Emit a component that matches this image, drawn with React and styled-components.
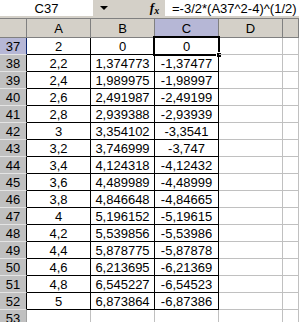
import React from "react";
import styled, { createGlobalStyle } from "styled-components";

const GlobalStyle = createGlobalStyle`
  html, body {
    margin: 0;
    padding: 0;
    background: #ffffff;
    overflow: hidden;
  }
  * {
    box-sizing: border-box;
  }
`;

// Contenedor de la hoja
const Sheet = styled.div`
  width: 299px;
  height: 322px;
  overflow: hidden;
  font-family: "Liberation Sans", Arial, sans-serif;
  font-size: 13px;
  color: #000;
  background: #fff;
`;

// Barra de fórmulas
const FormulaBar = styled.div`
  display: flex;
  height: 18px;
  background: #d4d0c8;
`;

const NameBox = styled.div`
  width: 93px;
  height: 16px;
  background: #fff;
  display: flex;
  align-items: center;
  justify-content: center;
`;

const DropButton = styled.div`
  width: 20px;
  height: 16px;
  display: flex;
  align-items: center;
  justify-content: center;
  padding-left: 2px;
`;

const Arrow = styled.span`
  width: 0;
  height: 0;
  border-left: 4px solid transparent;
  border-right: 4px solid transparent;
  border-top: 4px solid #000;
`;

const FxLabel = styled.div`
  margin-left: auto;
  width: 25px;
  height: 16px;
  display: flex;
  align-items: center;
  justify-content: center;
  font-family: "Liberation Serif", "Times New Roman", serif;
  font-style: italic;
  font-weight: bold;
  font-size: 13px;
  padding-left: 4px;

  span {
    font-size: 10px;
    position: relative;
    top: 2px;
  }
`;

const Formula = styled.div`
  width: 134px;
  height: 16px;
  background: #fff;
  display: flex;
  align-items: center;
  padding-left: 7px;
  white-space: nowrap;
`;

// Cuadrícula
const Grid = styled.div`
  display: grid;
  grid-template-columns: 27px 64px 64px 64px 64px 1fr;
  grid-template-rows: 19px;
  grid-auto-rows: 17px;
  border-top: 1px solid #808080;
`;

const Corner = styled.div`
  background: #d4d0c8;
  border-right: 1px solid #808080;
  border-bottom: 1px solid #808080;
`;

const ColHeader = styled.div`
  display: flex;
  align-items: center;
  justify-content: center;
  background: ${(p) => (p.$active ? "#b6b7d6" : "#d4d0c8")};
  border-right: 1px solid #808080;
  border-bottom: 1px solid ${(p) => (p.$active ? "#0a246a" : "#808080")};
`;

const RowHeader = styled.div`
  display: flex;
  align-items: center;
  justify-content: center;
  background: ${(p) => (p.$active ? "#b6b7d6" : "#c0c0c0")};
  border-right: 1px solid
    ${(p) => (p.$active ? "#0a246a" : p.$framed ? "#000" : "#a0a0a0")};
  border-bottom: 1px solid #e4e4e4;
`;

const Cell = styled.div`
  position: relative;
  display: flex;
  align-items: center;
  justify-content: center;
  white-space: nowrap;
  border-right: 1px solid ${(p) => (p.$framed ? "#000" : "#c0c0c0")};
  border-bottom: 1px solid ${(p) => (p.$framed ? "#000" : "#c0c0c0")};
`;

// Marco de la celda activa
const Selection = styled.div`
  position: absolute;
  top: -2px;
  left: -2px;
  right: -2px;
  bottom: -2px;
  border: 2px solid #000;
  pointer-events: none;
`;

const FillHandle = styled.div`
  position: absolute;
  right: -4px;
  bottom: -4px;
  width: 6px;
  height: 6px;
  background: #000;
  border: 1px solid #fff;
`;

const data = [
  ["2", "0", "0"],
  ["2,2", "1,374773", "-1,37477"],
  ["2,4", "1,989975", "-1,98997"],
  ["2,6", "2,491987", "-2,49199"],
  ["2,8", "2,939388", "-2,93939"],
  ["3", "3,354102", "-3,3541"],
  ["3,2", "3,746999", "-3,747"],
  ["3,4", "4,124318", "-4,12432"],
  ["3,6", "4,489989", "-4,48999"],
  ["3,8", "4,846648", "-4,84665"],
  ["4", "5,196152", "-5,19615"],
  ["4,2", "5,539856", "-5,53986"],
  ["4,4", "5,878775", "-5,87878"],
  ["4,6", "6,213695", "-6,21369"],
  ["4,8", "6,545227", "-6,54523"],
  ["5", "6,873864", "-6,87386"],
  null,
];

const columns = ["A", "B", "C", "D", ""];

const App = () => {
  return (
    <>
      <GlobalStyle />
      <Sheet>
        <FormulaBar>
          <NameBox>C37</NameBox>
          <DropButton>
            <Arrow />
          </DropButton>
          <FxLabel>
            f<span>x</span>
          </FxLabel>
          <Formula>=-3/2*(A37^2-4)^(1/2)</Formula>
        </FormulaBar>
        <Grid>
          <Corner />
          {columns.map((c) => (
            <ColHeader key={c || "e"} $active={c === "C"}>
              {c}
            </ColHeader>
          ))}
          {data.map((row, i) => {
            const num = 37 + i;
            return (
              <React.Fragment key={num}>
                <RowHeader $active={num === 37} $framed={!!row}>
                  {num}
                </RowHeader>
                {[0, 1, 2].map((j) => (
                  <Cell key={j} $framed={!!row}>
                    {row ? row[j] : ""}
                    {num === 37 && j === 2 && (
                      <Selection>
                        <FillHandle />
                      </Selection>
                    )}
                  </Cell>
                ))}
                <Cell />
                <Cell />
              </React.Fragment>
            );
          })}
        </Grid>
      </Sheet>
    </>
  );
};

export default App;
